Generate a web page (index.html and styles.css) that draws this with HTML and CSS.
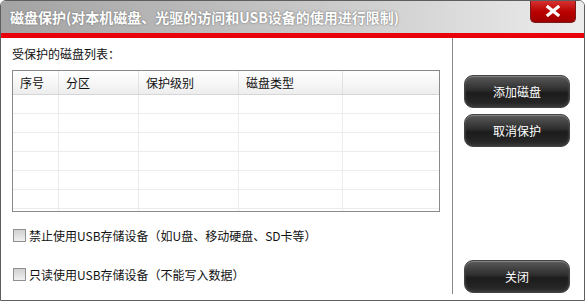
FILE: index.html
```html
<!DOCTYPE html>
<html>
  <head>
    <meta charset="utf-8">
    <link rel="stylesheet" href="styles.css">
  </head>
  <body>
    <div class="win">
      <div class="titlebar">
        <span class="title">磁盘保护(对本机磁盘、光驱的访问和USB设备的使用进行限制)</span>
        <div class="close">
          <svg width="16" height="12" viewBox="0 0 16 12">
            <path d="M3 2 L13 10 M13 2 L3 10" stroke="#fff" stroke-width="3.2" stroke-linecap="square" fill="none"/>
          </svg>
        </div>
      </div>
      <div class="redline"></div>

      <div class="main">
        <div class="left">
          <div class="label">受保护的磁盘列表：</div>
          <div class="grid">
            <table>
              <tr class="head">
                <th class="c1">序号</th>
                <th class="c2">分区</th>
                <th class="c3">保护级别</th>
                <th class="c4">磁盘类型</th>
                <th class="c5"></th>
              </tr>
              <tr><td></td><td></td><td></td><td></td><td></td></tr>
              <tr><td></td><td></td><td></td><td></td><td></td></tr>
              <tr><td></td><td></td><td></td><td></td><td></td></tr>
              <tr><td></td><td></td><td></td><td></td><td></td></tr>
              <tr><td></td><td></td><td></td><td></td><td></td></tr>
              <tr><td></td><td></td><td></td><td></td><td></td></tr>
              <tr><td></td><td></td><td></td><td></td><td></td></tr>
            </table>
          </div>
          <div class="check first"><span class="box"></span>禁止使用USB存储设备（如U盘、移动硬盘、SD卡等）</div>
          <div class="check"><span class="box"></span>只读使用USB存储设备（不能写入数据）</div>
        </div>
        <div class="sep"></div>
        <div class="right">
          <div class="btn">添加磁盘</div>
          <div class="btn">取消保护</div>
          <div class="spacer"></div>
          <div class="btn">关闭</div>
        </div>
      </div>
    </div>
  </body>
</html>
```

FILE: styles.css
```css
body {
  margin: 0;
  background: #fff;
  font-family: "Noto Sans CJK SC", "Noto Sans", sans-serif;
  font-size: 12px;
  color: #111;
}

.win {
  width: 585px;
  height: 301px;
  box-sizing: border-box;
  border: 1px solid #5e5e5e;
  border-radius: 6px 6px 0 0;
  overflow: hidden;
  display: flex;
  flex-direction: column;
}

.titlebar {
  position: relative;
  height: 32px;
  flex: none;
  background: linear-gradient(to right, #a3a3a3, #c9c9c9 55%, #ececec);
  display: flex;
  align-items: center;
  padding-left: 9px;
}

.title {
  color: #fff;
  font-weight: bold;
  font-size: 14px;
  text-shadow: 0 0 2px #777, 0 0 1px #888;
}

.close {
  position: absolute;
  top: -1px;
  right: 8px;
  width: 44px;
  height: 22px;
  border: 1px solid #7a1a1a;
  border-top: none;
  border-radius: 0 0 5px 5px;
  background: linear-gradient(#d93535, #b80000 55%, #a00000);
  box-shadow: inset 0 1px 0 #e66;
  display: flex;
  align-items: center;
  justify-content: center;
}

.redline {
  height: 5px;
  flex: none;
  background: #e8000b;
}

.main {
  flex: 1;
  display: flex;
}

.left {
  width: 451px;
  padding: 8px 0 0 11px;
  box-sizing: border-box;
}

.label {
  height: 16px;
  line-height: 16px;
}

.grid {
  margin-top: 8px;
  width: 428px;
  height: 142px;
  box-sizing: border-box;
  border: 1px solid #8a8a8e;
  overflow: hidden;
}

table {
  border-collapse: collapse;
  table-layout: fixed;
  width: 426px;
  font-size: 12px;
}

th {
  height: 23px;
  padding: 0 0 0 7px;
  text-align: left;
  font-weight: normal;
  color: #111;
  background: linear-gradient(#fff, #f7f7f7 50%, #ededee);
  border-bottom: 1px solid #d6d6d8;
  border-right: 1px solid #e2e2e4;
  line-height: 22px;
}

.c1 { width: 38px; }
.c2 { width: 72px; }
.c3 { width: 92px; }
.c4 { width: 96px; }
.c5 { border-right: none; }

td {
  height: 18px;
  padding: 0;
  border-bottom: 1px solid #ececec;
  border-right: 1px solid #ececec;
}

td:last-child {
  border-right: none;
}

.check {
  display: flex;
  align-items: center;
  height: 16px;
  margin-top: 23px;
}

.check.first {
  margin-top: 15px;
}

.box {
  width: 11px;
  height: 11px;
  border: 1px solid #8f8f8f;
  background: linear-gradient(#d0d0d0, #f0f0f0);
  margin: 0 3px 0 1px;
}

.sep {
  width: 1px;
  background: #8a8a8a;
  margin-bottom: 6px;
}

.right {
  flex: 1;
  display: flex;
  flex-direction: column;
  padding: 37px 0 7px 11px;
}

.btn {
  width: 106px;
  height: 33px;
  box-sizing: border-box;
  border: 1px solid #444;
  border-radius: 9px;
  background: linear-gradient(#5a5a5a, #2e2e2e 45%, #1c1c1c 55%, #2a2a2a);
  box-shadow: inset 0 1px 1px #888, inset 0 -2px 3px #3a3a3a;
  color: #fff;
  font-size: 12px;
  display: flex;
  align-items: center;
  justify-content: center;
  margin-bottom: 6px;
}

.btn:last-child {
  margin-bottom: 0;
}

.spacer {
  flex: 1;
}
```
